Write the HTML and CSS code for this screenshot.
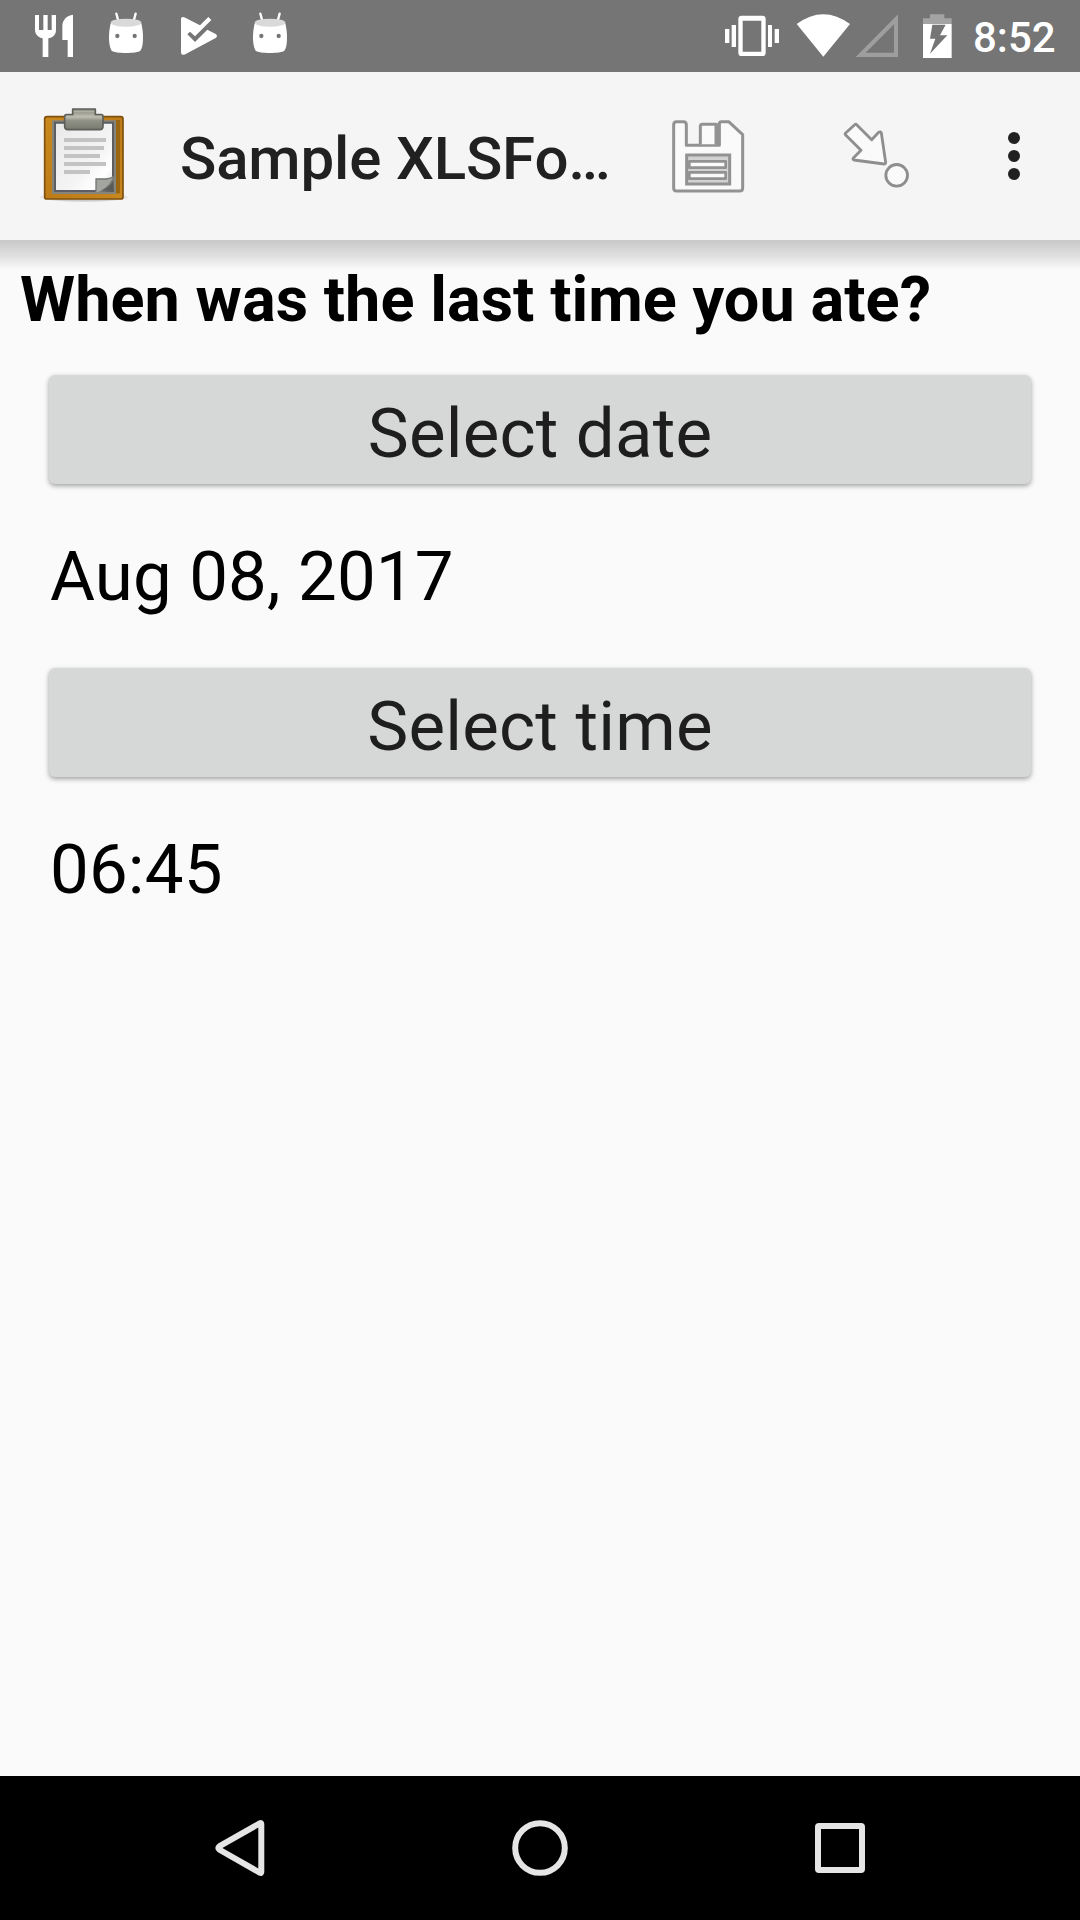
FILE: index.html
```html
<!DOCTYPE html>
<html lang="en">
<head>
<meta charset="utf-8">
<title>Sample XLSForm</title>
<link rel="stylesheet" href="styles.css">
</head>
<body>
<div class="status-bar">
  <div class="status-group notifications">
    <svg width="72" height="72" viewBox="54 0 216 216" fill="#fff"><path d="M105 45H117V90H130V45H143V90H155V45H168V90C168 104 158 114 145 115V171H128V115C115 113 105 103 105 90ZM219 44V171H203V120H187V76C188 60 200 46 219 44Z"/></svg>
    <svg width="72" height="72" viewBox="270 0 216 216"><use href="#android"/></svg>
    <svg width="72" height="72" viewBox="486 0 216 216" fill="#fff"><path d="M543 57C543 51 548 49 556 53L600 76L625 51L634 60L585 109L570 95L562 103L585 126L622 89L647 102Q655 108 647 114L556 163Q543 168 543 157Z"/></svg>
    <svg width="72" height="72" viewBox="270 0 216 216">
      <g id="android">
        <path d="M349 41L355 63M407 41L401 63" stroke="#fff" stroke-width="7" stroke-linecap="round"/>
        <path d="M332 70C328 88 327 100 327 112C327 130 330 145 335 152C345 161 411 161 421 152C427 145 429 130 429 112C429 100 428 88 424 70Z" fill="#fff"/>
        <ellipse cx="378" cy="68" rx="46" ry="12" fill="#d9d9d9"/>
        <circle cx="352" cy="108" r="6.5" fill="#757575"/><circle cx="404" cy="108" r="6.5" fill="#757575"/>
      </g>
    </svg>
  </div>
  <div class="status-group">
    <svg width="74" height="72" viewBox="60 0 222 216" fill="#fff"><path fill-rule="evenodd" d="M125 47H187Q197 47 197 57V158Q197 168 187 168H125Q115 168 115 158V57Q115 47 125 47ZM128 62V155H184V62Z"/><path d="M75 87H88V129H75ZM95 75H108V141H95ZM204 75H216V141H204ZM224 87H237V129H224Z"/></svg>
    <svg width="59" height="72" viewBox="282 0 177 216" fill="#fff"><path d="M290 72Q370 13 450 72L370 170Z"/></svg>
    <svg width="67" height="72" viewBox="459 0 201 216" fill="#9e9e9e"><path fill-rule="evenodd" d="M467 171L594 43V171ZM497 158H582V73Z"/></svg>
    <svg width="53" height="72" viewBox="660 0 159 216"><path d="M669 72V55H690V43H733V55H755V72Z" fill="#a3a3a3"/><path d="M669 72H755V174H669Z" fill="#fff"/><path d="M697 74H737L720 106H742L690 161L706 116H690Z" fill="#757575"/></svg>
    <span class="clock">8:52</span>
  </div>
</div>

<header class="toolbar">
  <svg class="app-icon" width="130" height="130" viewBox="0 0 390 390">
    <defs>
      <linearGradient id="board" x2="1" y2="1"><stop offset="0" stop-color="#cb8a1f"/><stop offset=".5" stop-color="#bd7c17"/><stop offset="1" stop-color="#c8871f"/></linearGradient>
      <linearGradient id="paper" x2="1" y2="1"><stop offset="0" stop-color="#e9e9e9"/><stop offset=".6" stop-color="#f4f4f4"/><stop offset=".8" stop-color="#fff"/><stop offset="1" stop-color="#ddd"/></linearGradient>
      <linearGradient id="clip" x2="0" y2="1"><stop offset="0" stop-color="#8c8d82"/><stop offset=".4" stop-color="#b9baac"/><stop offset=".55" stop-color="#929387"/><stop offset="1" stop-color="#77786f"/></linearGradient>
      <linearGradient id="curl" x2="1" y2="1"><stop offset="0" stop-color="#8f918d"/><stop offset=".45" stop-color="#c4c5c2"/><stop offset=".6" stop-color="#777"/><stop offset="1" stop-color="#555"/></linearGradient>
      <radialGradient id="shade"><stop offset=".75" stop-color="#000" stop-opacity=".17"/><stop offset="1" stop-color="#000" stop-opacity="0"/></radialGradient>
    </defs>
    <ellipse cx="192" cy="322" rx="138" ry="15" fill="url(#shade)"/>
    <rect x="74" y="80" width="235" height="247" rx="7" fill="url(#board)" stroke="#80500c" stroke-width="5"/>
    <path d="M285 90H300V310H285Z" fill="#9a6611"/>
    <path d="M96 91H288V312H96Z" fill="#85857b"/>
    <path d="M105 98H279V303H105Z" fill="url(#paper)" stroke="#5c5e63" stroke-width="6"/>
    <path d="M132 144H258V156H132ZM132 168H252V180H132ZM132 192H240V204H132ZM132 216H258V228H132ZM132 240H210V252H132Z" fill="#c3c3c3"/>
    <path d="M228 266H262Q274 266 282 258V306H228Z" fill="url(#curl)"/>
    <path d="M228 305V267H258Q273 266 282 259Q274 286 244 303" fill="#a3a5a0" stroke="#777a74" stroke-width="4"/>
    <path d="M247 301Q274 288 279 273V301Z" fill="#595b5b"/>
    <path d="M158 57H226V74H244Q249 74 249 80V109Q249 119 239 119H144Q134 119 134 109V80Q134 74 140 74H158Z" fill="url(#clip)" stroke="#5d5f59" stroke-width="5" stroke-linejoin="round"/>
    <path d="M161 64H223M138 78H245" stroke="#c4c5b8" stroke-width="3" opacity=".6"/>
  </svg>
  <h1 class="title">Sample XLSFo…</h1>
  <svg class="save" width="120" height="130" viewBox="0 -30 360 390" fill="#fafafa" stroke="#929292" stroke-width="9" stroke-linejoin="round">
    <path d="M80 65H100Q109 65 109 74V136H208V71Q208 65 214 65H236L278 104V264Q278 273 269 273H80Q71 273 71 264V74Q71 65 80 65Z"/>
    <path d="M151 133V79Q151 73 157 73H198V133"/><path d="M204 70V136" stroke-width="14"/>
    <path d="M110 165H239V252H110Z" stroke-width="9" fill="#d2d2d2" stroke-linejoin="miter"/><path stroke-width="8" d="M118 184H227V203H118ZM118 217H227V236H118Z"/>
  </svg>
  <svg class="jump" width="100" height="130" viewBox="0 -30 300 390" fill="#fafafa" stroke="#8e8e8e" stroke-width="8.5" stroke-linejoin="round">
    <path d="M77 105Q74 102 77 99L104 74Q107 71 110 74L155 119L176 97Q182 93 184 99L197 187Q197 192 192 192L102 180Q97 178 100 174L123 151Z"/><circle cx="230" cy="226" r="32.5"/>
  </svg>
  <svg class="overflow" width="100" height="130" viewBox="480 -30 300 390" fill="#212121"><circle cx="582" cy="114" r="18"/><circle cx="582" cy="168" r="18"/><circle cx="582" cy="222" r="18"/></svg>
</header>

<main class="form">
  <h2 class="question">When was the last time you ate?</h2>
  <button class="picker">Select date</button>
  <p class="value">Aug 08, 2017</p>
  <button class="picker">Select time</button>
  <p class="value">06:45</p>
</main>

<nav class="nav-bar">
  <svg width="300" height="144" viewBox="90 1776 300 144"><path d="M219.6 1846.2L260 1823.2Q261.3 1822.6 261.3 1824V1872Q261.3 1873.4 260 1872.8L219.6 1849.8Q217 1848 219.6 1846.2Z"/></svg>
  <svg width="300" height="144" viewBox="390 1776 300 144"><circle cx="540" cy="1848" r="24.8"/></svg>
  <svg width="300" height="144" viewBox="690 1776 300 144"><rect x="818" y="1826" width="44" height="44" rx="1"/></svg>
</nav>
</body>
</html>
```
FILE: styles.css
```css
* {
  box-sizing: border-box;
}

body {
  margin: 0;
  width: 1080px;
  height: 1920px;
  display: flex;
  flex-direction: column;
  background: #fafafa;
  font-family: Roboto, sans-serif;
  overflow: hidden;
}

svg {
  display: block;
  flex: none;
}

.status-bar {
  height: 72px;
  flex: none;
  display: flex;
  justify-content: space-between;
  background: #757575;
}

.status-group {
  display: flex;
}

.notifications {
  padding-left: 18px;
}

.clock {
  width: 107px;
  padding-top: 13px;
  font-size: 42px;
  line-height: 49px;
  font-weight: 500;
  color: #fff;
}

.toolbar {
  position: relative;
  height: 168px;
  flex: none;
  display: flex;
  padding: 18px 0 0 20px;
  background: #f5f5f5;
}

/* Drop shadow cast over the form */
.toolbar::after {
  content: "";
  position: absolute;
  top: 100%;
  left: 0;
  right: 0;
  height: 30px;
  background: linear-gradient(rgba(0, 0, 0, 0.2), rgba(0, 0, 0, 0.1) 55%, transparent);
}

.title {
  width: 470px;
  margin: 0 0 0 30px;
  padding-top: 34px;
  font-size: 60px;
  line-height: 70px;
  font-weight: 500;
  letter-spacing: -0.15px;
  color: #212121;
  white-space: nowrap;
}

.jump {
  margin-left: 50px;
}

.overflow {
  margin-left: 60px;
}

.form {
  flex: 1;
  display: flex;
  flex-direction: column;
  padding: 23px 49px 0;
}

.question {
  margin: 0 0 38px -29px;
  font-size: 63px;
  line-height: 74px;
  font-weight: 700;
  letter-spacing: 0.04px;
  color: #000;
  white-space: nowrap;
}

.picker {
  height: 109px;
  flex: none;
  padding: 8px 0 0;
  border: 0;
  border-radius: 6px;
  background: #d6d8d7;
  box-shadow: 0 2px 5px rgba(0, 0, 0, 0.36);
  font: 400 69px/81px Roboto, sans-serif;
  letter-spacing: 0.2px;
  color: #1e1e1e;
}

.value {
  margin: 52px 0 51px 1px;
  font-size: 69px;
  line-height: 81px;
  letter-spacing: 0.15px;
  color: #000;
}

.nav-bar {
  height: 144px;
  flex: none;
  display: flex;
  justify-content: center;
  background: #000;
  fill: none;
  stroke: #e5e5e5;
  stroke-width: 6px;
}
```
